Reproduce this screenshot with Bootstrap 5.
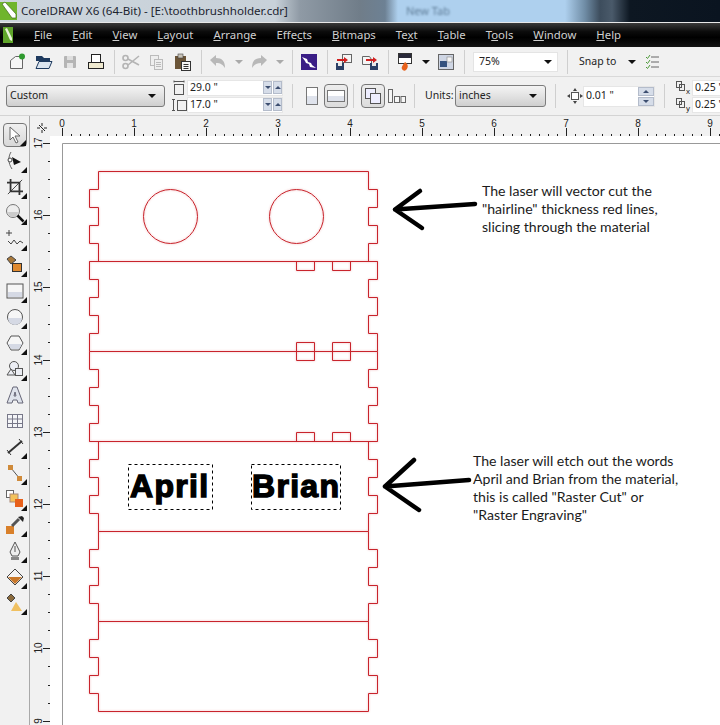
<!DOCTYPE html>
<html lang="en">
<head>
<meta charset="UTF-8">
<title>CorelDRAW X6</title>
<link href="https://cdn.jsdelivr.net/npm/bootstrap@5.3.0/dist/css/bootstrap.min.css" rel="stylesheet">
<style>
body { margin: 0; width: 720px; height: 725px; overflow: hidden; background: #f0f0f0; font-family: "Noto Sans", "Open Sans", sans-serif; font-size: 10.5px; color: #222; }
.title-strip { height: 23px; background: linear-gradient(90deg, #ccd5dc 0, #c8d1d9 275px, #8f9aa5 300px, #707d89 360px, #6d8194 385px, #aed0ee 398px, #aed0ee 565px, #6f8ca5 585px, #3d4d5d 600px, #4a5a6a 612px, #0d1722 630px, #0a1420 720px); border-bottom: 1px solid #e8e8e8; white-space: nowrap; }
.title-name { font-size: 11.6px; color: #1c2430; margin-left: 4px; width: 385px; flex: none; }
.tab-blur { color: #5f7d98; filter: blur(1px); font-size: 11px; }
.menu-strip { height: 24px; background: linear-gradient(#3a3a3a 0, #0c0c0c 35%, #000 60%, #141414 100%); color: #cfcfcf; padding-left: 3px; }
.menu-strip span { margin-right: 20px; font-size: 11.35px; }
.menu-strip svg { margin-right: 21px; }
.title-strip svg, .tool-strip svg, .prop-strip svg { flex: none; }
.tool-strip { height: 30px; background: #f1f1f1; padding-left: 5px; border-bottom: 1px solid #d9d9d9; white-space: nowrap; }
.prop-strip { height: 39px; background: #f1f1f1; padding-left: 6px; border-bottom: 1px solid #d4d4d4; white-space: nowrap; }
.tool-cell { width: 26px; height: 26px; flex: none; }
.tri-cell { width: 15px; height: 26px; flex: none; }
.tri { width: 0; height: 0; border-left: 4px solid transparent; border-right: 4px solid transparent; border-top: 4px solid #111; flex: none; }
.tri-grey { border-top-color: #aaa; }
.tool-sep { width: 1px; height: 24px; background: #cfcfcf; margin: 0 3px 0 5px; flex: none; }
.sep-wide { margin-left: 9px; }
.combo-white { width: 85px; height: 20px; background: #fff; border: 1px solid #e4e4e4; margin: 0 4px 0 5px; padding: 0 5px; flex: none; }
.snap-label { margin-left: 8px; width: 37px; flex: none; }
.combo-grey { height: 22px; border: 1px solid #7c7c7c; border-radius: 3px; background: linear-gradient(#f4f4f4, #e2e2e2 50%, #cfcfcf); padding: 0 4px 0 3px; flex: none; }
.combo-page { width: 159px; }
.combo-units { width: 91px; }
.num-col { gap: 1px; flex: none; }
.num-box { width: 96px; height: 16px; background: #fff; border: 1px solid #e6e6e6; padding-left: 2px; flex: none; }
.num-short { width: 72px; height: 21px; }
.num-tail { width: 40px; }
.num-pad { margin-left: 6px; }
.spin-btn { width: 9px; height: 13px; background: #d6dde9; border: 1px solid #b4bccb; margin-left: 1px; flex: none; display: flex; align-items: center; justify-content: center; }
.spin-btn::after { content: ""; border-left: 3px solid transparent; border-right: 3px solid transparent; border-top: 3px solid #3c4e70; }
.spin-btn.spin-up::after { border-top: 0; border-bottom: 3px solid #3c4e70; }
.spin-wide { width: 16px; height: 9px; }
.spin-stack { gap: 1px; }
.page-btn { width: 24px; height: 24px; flex: none; }
.page-on { border: 1px solid #777; border-radius: 4px; background: linear-gradient(#ededed, #dcdcdc); }
.units-label { margin-left: 7px; width: 30px; flex: none; }
.work-area { height: 609px; }
.tool-box { width: 30px; background: #f1f1f1; border-right: 1px solid #a9a9a9; padding-top: 7px; gap: 2px; flex: none; }
.box-cell { width: 24px; height: 24px; margin: 0 auto; position: relative; flex: none; }
.box-cell.fly::after { content: ""; position: absolute; right: 0; bottom: 0; border-left: 6px solid transparent; border-bottom: 6px solid #111; }
.box-on { border: 1px solid #777; border-radius: 4px; background: linear-gradient(#f0f0f0, #d8d8d8); }
.canvas-svg { width: 690px; height: 609px; display: block; }
.ruler-text { font-family: "Liberation Sans", sans-serif; font-size: 10px; fill: #222; }
.note-text { font-family: "Lato", sans-serif; font-size: 14.1px; fill: #1b1b1b; }
.name-text { font-family: "Liberation Sans", sans-serif; font-weight: 700; font-size: 32px; letter-spacing: 1.3px; fill: #000; stroke: #000; stroke-width: 1.4px; }
.laser-lines { filter: drop-shadow(0 0 1px rgba(200, 36, 44, .35)); }
</style>
</head>
<body>
<div class="title-strip d-flex align-items-center">
  <svg width="17" height="22" viewBox="0 0 17 22"><rect y="2" width="17" height="18" fill="#6fb52c"/><path d="M2 4l3-2 11 12v4h-4z" fill="#fff" stroke="#3c6a18" stroke-width=".7"/></svg>
  <div class="title-name">CorelDRAW X6 (64-Bit) - [E:\toothbrushholder.cdr]</div>
  <div class="tab-blur">New Tab</div>
</div>
<div class="menu-strip d-flex align-items-center">
  <svg width="10" height="16" viewBox="0 0 10 16"><rect width="10" height="16" fill="#5fa52a"/><path d="M2 2l2-1 5 10v3l-2-1z" fill="#e8f4d8"/></svg>
  <span><u>F</u>ile</span><span><u>E</u>dit</span><span><u>V</u>iew</span><span><u>L</u>ayout</span><span><u>A</u>rrange</span><span>Effe<u>c</u>ts</span><span><u>B</u>itmaps</span><span>Te<u>x</u>t</span><span><u>T</u>able</span><span>T<u>o</u>ols</span><span><u>W</u>indow</span><span><u>H</u>elp</span>
</div>
<div class="tool-strip d-flex align-items-center">
  <div class="tool-cell d-flex align-items-center justify-content-center"><svg width="18" height="18" viewBox="0 0 18 18"><path d="M1.500 7.500l5-4h7v12h-12z" fill="#f6f6f6" stroke="#666"/><circle cx="13" cy="3.500" r="3" fill="#2f9a2f"/></svg></div>
  <div class="tool-cell d-flex align-items-center justify-content-center"><svg width="18" height="18" viewBox="0 0 18 18"><path d="M1 3h6l2 2h6v3H1z" fill="#1e3a5f"/><path d="M1 15.500l3-7h13l-3 7z" fill="#dbe5f0" stroke="#1e3a5f"/></svg></div>
  <div class="tool-cell d-flex align-items-center justify-content-center"><svg width="16" height="16" viewBox="0 0 16 16"><rect x="2" y="2" width="12" height="12" rx="1" fill="#b5b5b5"/><rect x="5" y="2" width="6" height="4" fill="#dedede"/><rect x="5" y="9" width="6" height="5" fill="#e4e4e4"/></svg></div>
  <div class="tool-cell d-flex align-items-center justify-content-center"><svg width="18" height="18" viewBox="0 0 18 18"><rect x="4.500" y="1.500" width="9" height="9" fill="#fff" stroke="#222"/><rect x="1.500" y="9.500" width="15" height="6" fill="#efe9cf" stroke="#222"/></svg></div>
  <div class="tool-sep"></div>
  <div class="tool-cell d-flex align-items-center justify-content-center"><svg width="18" height="18" viewBox="0 0 18 18" fill="none" stroke="#b4b4b4" stroke-width="1.600"><circle cx="3.500" cy="5" r="2.500"/><circle cx="3.500" cy="13" r="2.500"/><path d="M6 6l11 6M6 12l11-9"/></svg></div>
  <div class="tool-cell d-flex align-items-center justify-content-center"><svg width="16" height="16" viewBox="0 0 16 16" fill="#eee" stroke="#bbb"><rect x="1.500" y="1.500" width="8" height="10"/><rect x="5.500" y="5.500" width="8" height="10"/><path d="M7 8.500h5M7 10.500h5M7 12.500h5" fill="none"/></svg></div>
  <div class="tool-cell d-flex align-items-center justify-content-center"><svg width="18" height="18" viewBox="0 0 18 18"><rect x="1" y="3" width="11" height="13" fill="#6b5538"/><rect x="4" y="1" width="5" height="4" fill="#c9c4b8" stroke="#444" stroke-width=".6"/><rect x="7.500" y="8.500" width="9" height="9" fill="#f7f7f7" stroke="#333"/><path d="M9.500 11.500h5M9.500 13.500h5M9.500 15.500h5" stroke="#333"/></svg></div>
  <div class="tool-sep"></div>
  <div class="tool-cell d-flex align-items-center justify-content-center"><svg width="18" height="18" viewBox="0 0 18 18"><path d="M1 7l6-5v3c6 0 9 3 9 10-2-3-4-5-9-5v3z" fill="#b8b8b8"/></svg></div>
  <div class="tri-cell d-flex align-items-center justify-content-center"><div class="tri tri-grey"></div></div>
  <div class="tool-cell d-flex align-items-center justify-content-center"><svg width="18" height="18" viewBox="0 0 18 18"><path d="M17 7l-6-5v3c-6 0-9 3-9 10 2-3 4-5 9-5v3z" fill="#b8b8b8"/></svg></div>
  <div class="tri-cell d-flex align-items-center justify-content-center"><div class="tri tri-grey"></div></div>
  <div class="tool-sep"></div>
  <div class="tool-cell d-flex align-items-center justify-content-center"><svg width="16" height="16" viewBox="0 0 16 16"><rect width="16" height="16" fill="#3a1d86"/><path d="M1 3l5 2 1 3 3 1 1 2 4 3-6-1-1-3-3-1-1-2z" fill="#fff"/></svg></div>
  <div class="tool-sep"></div>
  <div class="tool-cell d-flex align-items-center justify-content-center"><svg width="18" height="18" viewBox="0 0 18 18"><rect x="7.500" y="1.500" width="9" height="8" fill="#f5f5f5" stroke="#666"/><path d="M2 6h7V4l4 3-4 3V8H2z" fill="#d02020"/><rect x="1" y="10" width="8" height="7" fill="#2a3f66"/><rect x="3" y="10" width="4" height="3" fill="#e8e8e8"/></svg></div>
  <div class="tool-cell d-flex align-items-center justify-content-center"><svg width="18" height="18" viewBox="0 0 18 18"><path d="M1.500 3.500h7l2 3v5h-9z" fill="#f5f5f5" stroke="#666"/><path d="M5 6h7V4l4 3-4 3V8H5z" fill="#d02020"/><rect x="9" y="10" width="8" height="7" fill="#2a3f66"/><rect x="11" y="10" width="4" height="3" fill="#e8e8e8"/></svg></div>
  <div class="tool-sep"></div>
  <div class="tool-cell d-flex align-items-center justify-content-center"><svg width="18" height="20" viewBox="0 0 18 20"><rect x="2.500" y="1.500" width="13" height="10" fill="#fff" stroke="#333"/><rect x="3" y="2" width="12" height="4" fill="#2a2a3a"/><path d="M9 10c3 2 4 5 1 8-1 1-3 1-4-1-1-2 1-4 3-7z" fill="#e8621c"/></svg></div>
  <div class="tri-cell d-flex align-items-center justify-content-center"><div class="tri"></div></div>
  <div class="tool-cell d-flex align-items-center justify-content-center"><svg width="16" height="16" viewBox="0 0 16 16"><rect x=".5" y=".5" width="15" height="15" fill="#cfd6e4" stroke="#666"/><rect x="2" y="7" width="7" height="6" fill="#35527f"/><rect x="9" y="3" width="5" height="5" fill="#f5f5f5" stroke="#888" stroke-width=".6"/></svg></div>
  <div class="tool-sep"></div>
  <div class="combo-white d-flex align-items-center justify-content-between"><span>75%</span><div class="tri"></div></div>
  <div class="tool-sep"></div>
  <div class="snap-label">Snap to</div>
  <div class="tri-cell d-flex align-items-center justify-content-center ms-2"><div class="tri"></div></div>
  <div class="tool-cell d-flex align-items-center justify-content-center"><svg width="14" height="16" viewBox="0 0 14 16" fill="none"><path d="M1 3l1.500 1.500L5 1M1 8l1.500 1.500L5 6M1 13l1.500 1.500L5 11" stroke="#4e9a3a"/><path d="M6 3h8M6 8h8M6 13h8" stroke="#666"/></svg></div>
</div>
<div class="prop-strip d-flex align-items-center">
  <div class="combo-grey combo-page d-flex align-items-center justify-content-between"><span>Custom</span><div class="tri me-1"></div></div>
  <div class="d-flex flex-column num-col num-pad">
    <div class="d-flex align-items-center"><svg width="16" height="16" viewBox="0 0 16 16" fill="none" stroke="#555"><rect x="3.500" y="4.500" width="9" height="10"/><path d="M3 1.500h10M3 .5v2M13 .5v2"/></svg><div class="num-box d-flex align-items-center justify-content-between"><span>29.0 "</span><span class="d-flex"><i class="spin-btn"></i><i class="spin-btn spin-up"></i></span></div></div>
    <div class="d-flex align-items-center"><svg width="16" height="16" viewBox="0 0 16 16" fill="none" stroke="#555"><rect x="6.500" y="3.500" width="9" height="10"/><path d="M2.500 2v12M1 2.500h3M1 13.500h3"/></svg><div class="num-box d-flex align-items-center justify-content-between"><span>17.0 "</span><span class="d-flex"><i class="spin-btn"></i><i class="spin-btn spin-up"></i></span></div></div>
  </div>
  <div class="tool-sep sep-wide"></div>
  <div class="page-btn d-flex align-items-center justify-content-center ms-1"><svg width="12" height="18" viewBox="0 0 12 18"><rect x=".5" y=".5" width="11" height="17" fill="#fff" stroke="#777"/><rect x="1" y="9" width="10" height="8" fill="#dfe3ec"/></svg></div>
  <div class="page-btn page-on d-flex align-items-center justify-content-center"><svg width="18" height="12" viewBox="0 0 18 12"><rect x=".5" y=".5" width="17" height="11" fill="#fff" stroke="#777"/><rect x="1" y="6" width="16" height="5" fill="#dfe3ec"/></svg></div>
  <div class="tool-sep"></div>
  <div class="page-btn page-on d-flex align-items-center justify-content-center ms-1"><svg width="18" height="18" viewBox="0 0 18 18" fill="#eef" stroke="#555"><rect x="1.500" y="1.500" width="10" height="10"/><rect x="6.500" y="6.500" width="10" height="10"/></svg></div>
  <div class="page-btn d-flex align-items-center justify-content-center"><svg width="18" height="14" viewBox="0 0 18 14" fill="#f6f6f6" stroke="#666"><rect x=".5" y=".5" width="4" height="13"/><rect x="6.500" y="7.500" width="5" height="6"/><rect x="13" y="7.500" width="4.500" height="6"/></svg></div>
  <div class="tool-sep"></div>
  <div class="units-label">Units:</div>
  <div class="combo-grey combo-units d-flex align-items-center justify-content-between"><span>inches</span><div class="tri me-1"></div></div>
  <div class="tool-sep sep-wide"></div>
  <svg width="16" height="16" viewBox="0 0 16 16" class="ms-2"><rect x="4.500" y="4.500" width="7" height="7" fill="#fff" stroke="#555"/><path d="M8 0l2 3H6zM8 16l-2-3h4zM0 8l3-2v4zM16 8l-3 2V6z" fill="#444"/></svg>
  <div class="num-box num-short d-flex align-items-center justify-content-between"><span>0.01 "</span><span class="d-flex flex-column spin-stack"><i class="spin-btn spin-wide spin-up"></i><i class="spin-btn spin-wide"></i></span></div>
  <div class="tool-sep sep-wide"></div>
  <div class="d-flex flex-column num-col ms-2">
    <div class="d-flex align-items-center"><svg width="16" height="16" viewBox="0 0 16 16" fill="none" stroke="#555"><rect x=".5" y="1.500" width="5" height="6"/><rect x="3.500" y="4.500" width="5" height="6"/><text x="10" y="14" font-size="8" fill="#222" stroke="none" font-family="Liberation Sans">x</text></svg><div class="num-box num-tail d-flex align-items-center"><span>0.25 "</span></div></div>
    <div class="d-flex align-items-center"><svg width="16" height="16" viewBox="0 0 16 16" fill="none" stroke="#555"><rect x=".5" y="1.500" width="5" height="6"/><rect x="3.500" y="4.500" width="5" height="6"/><text x="10" y="14" font-size="8" fill="#222" stroke="none" font-family="Liberation Sans">y</text></svg><div class="num-box num-tail d-flex align-items-center"><span>0.25 "</span></div></div>
  </div>
</div>
<div class="work-area d-flex">
  <div class="tool-box d-flex flex-column">
    <div class="box-cell box-on fly d-flex align-items-center justify-content-center"><svg width="16" height="18" viewBox="0 0 16 18"><path d="M3 1v13l3-3 3 6 2-1-3-6h5z" fill="#fff" stroke="#666"/></svg></div>
    <div class="box-cell fly d-flex align-items-center justify-content-center"><svg width="18" height="20" viewBox="0 0 18 20" fill="none"><path d="M5 1c-3 5-3 11 1 17" stroke="#666"/><circle cx="4" cy="9" r="2" fill="#fff" stroke="#444"/><path d="M6 6l9 5-7 3z" fill="#111"/></svg></div>
    <div class="box-cell fly d-flex align-items-center justify-content-center"><svg width="16" height="16" viewBox="0 0 18 18" fill="none" stroke="#333" stroke-width="2"><path d="M4 0v14h14M0 4h14v14"/><path d="M1 17L17 1" stroke-width="1"/></svg></div>
    <div class="box-cell fly d-flex align-items-center justify-content-center"><svg width="20" height="20" viewBox="0 0 20 20"><circle cx="8" cy="8" r="6.500" fill="#eee" stroke="#777"/><path d="M3 9h10a5 5 0 0 1-10 0z" fill="#ccc"/><path d="M12.500 12.500l6 6" stroke="#111" stroke-width="2.500"/></svg></div>
    <div class="box-cell fly d-flex align-items-center justify-content-center"><svg width="20" height="18" viewBox="0 0 20 18" fill="none" stroke="#444"><path d="M4 0v6M1 3h6"/><path d="M3 11l3 3 3-4 3 4 3-3 3 2"/></svg></div>
    <div class="box-cell fly d-flex align-items-center justify-content-center"><svg width="20" height="20" viewBox="0 0 20 20"><path d="M2 4l4-3 5 4-5 4z" fill="#a8793c" stroke="#444"/><rect x="7.500" y="8.500" width="9" height="8" fill="#e08a30" stroke="#333"/></svg></div>
    <div class="box-cell fly d-flex align-items-center justify-content-center"><svg width="18" height="16" viewBox="0 0 18 16"><rect x="1" y="1" width="16" height="14" fill="#f6f6f6" stroke="#555"/><rect x="2" y="9" width="14" height="5" fill="#d5d9e4"/></svg></div>
    <div class="box-cell fly d-flex align-items-center justify-content-center"><svg width="18" height="18" viewBox="0 0 18 18"><circle cx="9" cy="9" r="7.500" fill="#f6f6f6" stroke="#555"/><path d="M2 10h14a7 7 0 0 1-14 0z" fill="#d5d9e4"/></svg></div>
    <div class="box-cell fly d-flex align-items-center justify-content-center"><svg width="18" height="16" viewBox="0 0 18 16"><path d="M5 1h8l4 7-4 7H5L1 8z" fill="#f6f6f6" stroke="#555"/><path d="M2 9h14l-3 5H5z" fill="#d5d9e4"/></svg></div>
    <div class="box-cell fly d-flex align-items-center justify-content-center"><svg width="18" height="18" viewBox="0 0 18 18" fill="#eceef4" stroke="#555"><circle cx="8" cy="6" r="4.500"/><rect x="9.500" y="8.500" width="7" height="7"/><path d="M1 15l4-6 4 6z"/></svg></div>
    <div class="box-cell d-flex align-items-center justify-content-center"><svg width="18" height="18" viewBox="0 0 18 18"><path d="M7 1h4l6 16h-5l-1-3H7l-1 3H1zM8 10h2L9 6z" fill="#dfe3ec" stroke="#667"/></svg></div>
    <div class="box-cell d-flex align-items-center justify-content-center"><svg width="16" height="14" viewBox="0 0 16 14" fill="#f4f5f8" stroke="#778"><rect x=".5" y=".5" width="15" height="13"/><path d="M.5 5h15M.5 9.500h15M5.500 .5v13M10.500 .5v13" fill="none"/></svg></div>
    <div class="box-cell fly d-flex align-items-center justify-content-center"><svg width="18" height="18" viewBox="0 0 18 18" fill="none" stroke="#333"><path d="M2 15L16 3" stroke-width="2"/><path d="M1 12l4 5M13 1l4 5"/></svg></div>
    <div class="box-cell fly d-flex align-items-center justify-content-center"><svg width="18" height="18" viewBox="0 0 18 18"><path d="M5 4l9 11" stroke="#555"/><rect x="2" y="1" width="5" height="5" fill="#cf8a3a"/><rect x="11" y="12" width="5" height="5" fill="#cf8a3a"/></svg></div>
    <div class="box-cell fly d-flex align-items-center justify-content-center"><svg width="20" height="20" viewBox="0 0 20 20"><rect x="1.500" y="1.500" width="7" height="7" fill="#fff" stroke="#666"/><rect x="5" y="5" width="8" height="8" fill="#f3c25c" stroke="#a87"/><rect x="10" y="10" width="8" height="8" fill="#e8601a"/></svg></div>
    <div class="box-cell fly d-flex align-items-center justify-content-center"><svg width="20" height="20" viewBox="0 0 20 20"><rect x="1" y="11" width="8" height="8" fill="#d9802a"/><path d="M7 11l7-7" stroke="#555" stroke-width="3"/><path d="M13 2l4-1 2 2-1 4z" fill="#222"/></svg></div>
    <div class="box-cell fly d-flex align-items-center justify-content-center"><svg width="14" height="20" viewBox="0 0 14 20"><path d="M7 1l5 10-2 4H4l-2-4z" fill="#eee" stroke="#555"/><path d="M7 5v6" stroke="#555"/><rect x="3" y="16" width="8" height="3" fill="#888"/></svg></div>
    <div class="box-cell fly d-flex align-items-center justify-content-center"><svg width="20" height="20" viewBox="0 0 20 20"><path d="M10 2l8 8-8 8-8-8z" fill="#f4f4f4" stroke="#444"/><path d="M3 10h14l-7 7z" fill="#c9782a"/></svg></div>
    <div class="box-cell fly d-flex align-items-center justify-content-center"><svg width="20" height="20" viewBox="0 0 20 20"><path d="M2 5l4-4 4 4-4 4z" fill="#8a6a3c" stroke="#444"/><path d="M11 9l6 9H6z" fill="#f0c060"/></svg></div>
  </div>
  <svg id="drawing" class="canvas-svg" viewBox="30 116 690 609">
    <rect x="30" y="116" width="690" height="609" fill="#f1f1f1"/>
    <rect x="50" y="136" width="670" height="589" fill="#fff"/>
    <path d="M62.500 725V143.500H720" fill="none" stroke="#999"/>
    <g id="ruler" stroke="#222" fill="none"></g>
    <path d="M42 123v3M42 130v3M37 128h3M44 128h3M39 125l6 6" stroke="#222" fill="none"/>
    <g class="laser-lines" fill="none" stroke="#c8242c">
      <path id="laser"/>
      <path d="M98.500 171.500H368.500M89.500 261.500H377.500M89.500 351.500H377.500M89.500 441.500H377.500M98.500 531.500H368.500M98.500 621.500H368.500M98.500 711.500H368.500"/>
      <circle cx="170.500" cy="216.500" r="27"/>
      <circle cx="296.500" cy="216.500" r="27"/>
      <path d="M296.500 261.500v9h18v-9M332.500 261.500v9h18v-9M296.500 342.500h18v18h-18zM332.500 342.500h18v18h-18zM296.500 441.500v-9h18v9M332.500 441.500v-9h18v9"/>
    </g>
    <g fill="none" stroke="#000" stroke-dasharray="3 3">
      <rect x="128.500" y="464.500" width="84" height="45"/>
      <rect x="251.500" y="464.500" width="89" height="45"/>
    </g>
    <text class="name-text" x="130" y="497">April</text>
    <text class="name-text" x="252" y="497">Brian</text>
    <g fill="none" stroke="#000" stroke-width="4.500" stroke-linecap="round" stroke-linejoin="round">
      <path d="M420 191L395 209.500 422 228M395 209.500L475 204"/>
      <path d="M414 460L385 486.500 419 510M385 486.500L469 480"/>
    </g>
    <g class="note-text">
      <text x="482" y="196">The laser will vector cut the</text>
      <text x="482" y="214">"hairline" thickness red lines,</text>
      <text x="482" y="232">slicing through the material</text>
      <text x="473" y="466">The laser will etch out the words</text>
      <text x="473" y="484">April and Brian from the material,</text>
      <text x="473" y="502">this is called "Raster Cut" or</text>
      <text x="473" y="520">"Raster Engraving"</text>
    </g>
  </svg>
</div>
<script src="https://cdn.jsdelivr.net/npm/bootstrap@5.3.0/dist/js/bootstrap.bundle.min.js"></script>
<script>
// rulers: 72px to the inch
var rulerSvg = "";
for (var x = 62; x < 720; x += 9) {
    var inch = (x - 62) / 72;
    if (Number.isInteger(inch)) {
        rulerSvg += `<path d="M${x + .5} 128V136"/><text class="ruler-text" x="${x}" y="127" text-anchor="middle" stroke="none">${inch}</text>`;
    } else {
        rulerSvg += `<path d="M${x + .5} 134V136"/>`;
    }
}
for (var i = 0; i < 33; i++) {
    var y = Math.round(143 + i * 18.05);
    if (i % 4 == 0) {
        rulerSvg += `<path d="M43 ${y + .5}H50"/><text class="ruler-text" transform="translate(42 ${y}) rotate(-90)" text-anchor="middle" stroke="none">${17 - i / 4}</text>`;
    } else {
        rulerSvg += `<path d="M48 ${y + .5}H50"/>`;
    }
}
document.getElementById("ruler").innerHTML = rulerSvg;

// finger joints down both sides of the six panels
var panels = [[171.5, 1], [261.5, 0], [351.5, 0], [441.5, 1], [531.5, 1], [621.5, 1]];
function edge(inner, outer) {
    var d = "";
    panels.forEach(function (p) {
        var a = p[1] ? inner : outer, b = p[1] ? outer : inner;
        d += `${d ? "L" : "M"}${a} ${p[0]}`;
        for (var k = 1; k < 5; k++) {
            var next = k % 2 ? b : a;
            d += `V${p[0] + k * 18}H${next}`;
        }
        d += `V${p[0] + 90}`;
    });
    return d;
}
document.getElementById("laser").setAttribute("d", edge(98.5, 89.5) + edge(368.5, 377.5));
</script>
</body>
</html>
